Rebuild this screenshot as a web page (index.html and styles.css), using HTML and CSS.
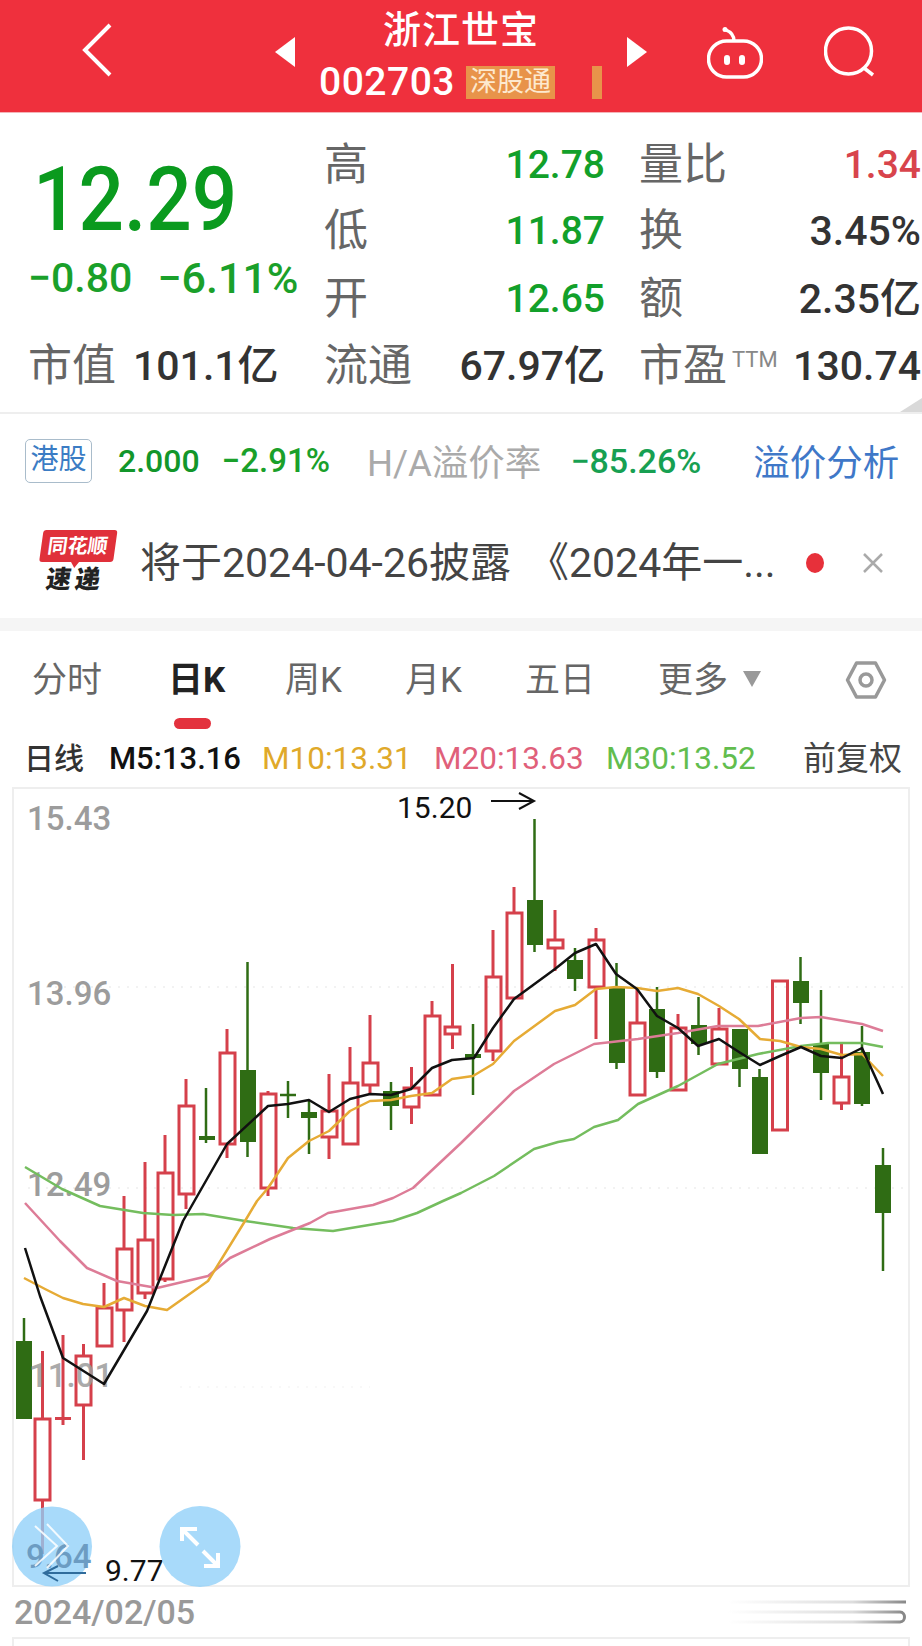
FILE: index.html
```html
<!DOCTYPE html>
<html lang="zh-CN">
<head>
<meta charset="utf-8">
<title>浙江世宝 002703</title>
<link rel="stylesheet" href="styles.css">
</head>
<body>
<div class="page">
  <header class="topbar">
    <svg class="ic-back" viewBox="0 0 30 54"><path d="M28 2 3 27l25 25"/></svg>
    <svg class="ic-tri" viewBox="0 0 20 30"><path d="M20 0v30L0 15z"/></svg>
    <div class="stock-id">
      <div class="stock-name">浙江世宝</div>
      <div class="stock-code-row">
        <span class="stock-code">002703</span>
        <span class="badge-sz">深股通</span>
        <span class="badge-bar"></span>
      </div>
    </div>
    <svg class="ic-tri" viewBox="0 0 20 30"><path d="M0 0v30l20-15z"/></svg>
    <svg class="ic-robot" viewBox="0 0 56 54"><path d="M27 15C27 9 24 6 19 4"/><circle class="robot-tip" cx="18" cy="3.500" r="2.500"/><rect x="1.500" y="15" width="53" height="36" rx="18"/><path class="eye" d="M20 32v4M35 32v4"/></svg>
    <svg class="ic-search" viewBox="0 0 52 52"><circle cx="24.500" cy="25" r="23"/><path d="M40 42 49 49"/></svg>
  </header>

  <section class="stats">
    <div class="price-cell">
      <div class="price">12.29</div>
    </div>
    <div class="chg-cell"><span>−0.80</span><span class="chg-pct">−6.11%</span></div>
    <div class="stat c2"><span class="lab">高</span><span class="val green">12.78</span></div>
    <div class="stat c3"><span class="lab">量比</span><span class="val red">1.34</span></div>
    <div class="stat c2"><span class="lab">低</span><span class="val green">11.87</span></div>
    <div class="stat c3"><span class="lab">换</span><span class="val">3.45%</span></div>
    <div class="stat c2"><span class="lab">开</span><span class="val green">12.65</span></div>
    <div class="stat c3"><span class="lab">额</span><span class="val">2.35亿</span></div>
    <div class="stat mktcap"><span class="lab">市值</span><span class="val">101.1亿</span></div>
    <div class="stat c2"><span class="lab">流通</span><span class="val">67.97亿</span></div>
    <div class="stat c3"><span class="lab">市盈<sup class="ttm">TTM</sup></span><span class="val">130.74</span></div>
  </section>

  <section class="hk">
    <span class="hk-tag">港股</span>
    <span class="hk-price">2.000</span>
    <span class="hk-chg">−2.91%</span>
    <span class="hk-label">H/A溢价率</span>
    <span class="hk-prem">−85.26%</span>
    <span class="hk-link">溢价分析</span>
  </section>

  <section class="news">
    <div class="logo">
      <div class="logo-top">同花顺</div>
      <div class="logo-bot">速递</div>
    </div>
    <div class="news-text">将于2024-04-26披露<span class="quote">《</span>2024年一...</div>
    <span class="news-dot"></span>
    <svg class="news-x" viewBox="0 0 20 20"><path d="M1 1l18 18M19 1 1 19"/></svg>
  </section>

  <div class="band"></div>

  <nav class="tabs">
    <span class="tab">分时</span>
    <span class="tab active">日K</span>
    <span class="tab">周K</span>
    <span class="tab">月K</span>
    <span class="tab">五日</span>
    <span class="tab more">更多<svg class="ic-more" viewBox="0 0 18 16"><path d="M0 0h18L9 16z"/></svg></span>
    <svg class="ic-hex" viewBox="0 0 42 38"><path d="M11.500 2h19L39.500 19 30.500 36h-19L2.500 19z"/><circle cx="21" cy="19" r="6"/></svg>
  </nav>

  <div class="legend">
    <span class="lg-type">日线</span>
    <span class="lg-m5">M5:13.16</span>
    <span class="lg-m10">M10:13.31</span>
    <span class="lg-m20">M20:13.63</span>
    <span class="lg-m30">M30:13.52</span>
    <span class="lg-adj">前复权</span>
  </div>

  <svg class="chart" viewBox="0 786 922 800">
    <rect class="frame" x="13" y="787" width="896" height="798"/>
    <path class="grid" d="M28 986H905M28 1187H905"/>
    <path class="grid-faint" d="M180 1386H370"/>

    <g class="down">
      <path d="M24 1317V1340"/><rect x="16" y="1340" width="16" height="78"/>
      <path d="M206 1087V1142"/><rect x="199" y="1135" width="16" height="4"/>
      <path d="M247.500 961V1156"/><rect x="240" y="1069" width="16" height="72"/>
      <path d="M288 1080V1117M280 1094H296"/>
      <path d="M309 1100V1153"/><rect x="301" y="1111" width="16" height="6"/>
      <path d="M391 1081V1129"/><rect x="383" y="1090" width="16" height="15"/>
      <path d="M473 1023V1094"/><rect x="465" y="1053" width="16" height="4"/>
      <path d="M534.500 818V951"/><rect x="527" y="899" width="16" height="45"/>
      <path d="M575 947V990"/><rect x="567" y="959" width="16" height="19"/>
      <path d="M616.500 962V1068"/><rect x="609" y="987" width="16" height="75"/>
      <path d="M657 986V1077"/><rect x="649" y="1008" width="16" height="63"/>
      <path d="M698.500 996V1054"/><rect x="691" y="1024" width="16" height="19"/>
      <path d="M739.500 1028V1086"/><rect x="732" y="1028" width="16" height="40"/>
      <path d="M759.500 1068V1076"/><rect x="752" y="1076" width="16" height="77"/>
      <path d="M800.500 956V1023"/><rect x="793" y="980" width="16" height="22"/>
      <path d="M821 989V1099"/><rect x="813" y="1043" width="16" height="29"/>
      <path d="M862 1025V1105"/><rect x="854" y="1051" width="16" height="52"/>
      <path d="M883 1147V1270"/><rect x="875" y="1164" width="16" height="48"/>
    </g>

    <g class="up">
      <path d="M42.500 1350V1418M42.500 1499V1553M35 1418H50V1499H35Z"/>
      <path d="M63 1334V1424M55 1417.500H71"/>
      <path d="M83.500 1343V1355M83.500 1404V1459M76 1355H91V1404H76Z"/>
      <path d="M104 1282V1307M97 1307H112V1345H97Z"/>
      <path d="M124 1195V1248M124 1309V1341M117 1248H132V1309H117Z"/>
      <path d="M145 1161V1239M145 1292V1298M138 1239H153V1292H138Z"/>
      <path d="M165 1134V1172M165 1278V1281M158 1172H173V1278H158Z"/>
      <path d="M186 1078V1105M186 1193V1208M179 1105H194V1193H179Z"/>
      <path d="M227 1028V1052M227 1143V1157M220 1052H235V1143H220Z"/>
      <path d="M268 1090V1093M268 1187V1195M261 1093H276V1187H261Z"/>
      <path d="M329 1073V1110M329 1136V1158M322 1110H337V1136H322Z"/>
      <path d="M350 1046V1082M343 1082H358V1143H343Z"/>
      <path d="M370 1014V1062M370 1084V1093M363 1062H378V1084H363Z"/>
      <path d="M411.500 1066V1087M411.500 1106V1123M404 1087H419V1106H404Z"/>
      <path d="M432 1000V1015M425 1015H440V1094H425Z"/>
      <path d="M452.500 963V1026M452.500 1033V1048M445 1026H460V1033H445Z"/>
      <path d="M493 929V976M493 1050V1060M486 976H501V1050H486Z"/>
      <path d="M514 886V912M507 912H522V997H507Z"/>
      <path d="M555 909V939M555 947V970M548 939H563V947H548Z"/>
      <path d="M596 927V939M596 986V1038M589 939H604V986H589Z"/>
      <path d="M637 988V1022M630 1022H645V1094H630Z"/>
      <path d="M678 1013V1027M671 1027H686V1089H671Z"/>
      <path d="M719 1007V1028M712 1028H727V1063H712Z"/>
      <path d="M772.500 980H787.500V1129H772.500Z"/>
      <path d="M841.500 1042V1076M841.500 1102V1109M834 1076H849V1102H834Z"/>
    </g>

    <text class="axis" x="27" y="829">15.43</text>
    <text class="axis" x="27" y="1004">13.96</text>
    <text class="axis" x="27" y="1195">12.49</text>
    <text class="axis faint" x="29" y="1386">11.01</text>

    <polyline class="ma30" points="25,1166 62,1188 100,1205 143,1212 173,1214 203,1213 245,1220 293,1227 333,1230 393,1220 417,1212 443,1200 461,1192 494,1175 534,1148 558,1141 574,1138 594,1126 618,1119 638,1103 678,1085 718,1063 758,1053 801,1045 828,1042 862,1042 883,1046"/>
    <polyline class="ma20" points="25,1202 60,1240 87,1267 117,1280 157,1287 208,1275 230,1257 270,1238 310,1222 328,1212 373,1204 393,1197 413,1187 461,1142 514,1090 554,1063 594,1043 638,1038 678,1032 718,1025 758,1025 801,1017 821,1016 862,1023 883,1030"/>
    <polyline class="ma10" points="24,1277 45,1288 63,1297 83,1303 104,1306 124,1297 145,1305 167,1309 208,1280 245,1220 257,1200 268,1187 288,1157 309,1140 329,1130 350,1110 370,1100 391,1099 411,1095 432,1092 452,1078 473,1075 493,1063 514,1040 555,1010 575,1004 596,988 616,986 637,987 657,990 678,987 698,993 719,1005 739,1018 760,1038 780,1040 801,1046 821,1048 842,1054 862,1053 883,1075"/>
    <polyline class="ma5" points="25,1247 40,1295 63,1357 104,1383 147,1310 183,1220 227,1143 268,1105 288,1103 309,1099 329,1111 350,1098 370,1093 391,1094 411,1088 432,1067 452,1059 474,1057 493,1027 514,998 555,968 575,952 596,943 616,973 637,988 657,1015 678,1027 698,1045 719,1038 739,1051 760,1064 780,1055 801,1046 821,1055 842,1057 862,1047 883,1093"/>

    <text class="note" x="397" y="817">15.20</text>
    <path class="arrow" d="M491 800H534M519 792l15 8-15 8"/>
    <text class="note" x="105" y="1580">9.77</text>

    <circle class="fab" cx="52" cy="1545.500" r="40"/>
    <circle class="fab" cx="200" cy="1545.500" r="40.500"/>
    <text class="axis under-fab" x="26" y="1567">9.64</text>
    <path class="arrow under-fab-arrow" d="M86 1572H44M58 1565l-14 7 14 8"/>
    <path class="fab-ic thin" d="M35 1525l22 20-22 20M47 1523l21 22-21 22"/>
    <path class="fab-ic" d="M182 1540v-12h15M182 1528l16 16M218 1552v13h-14M218 1565l-15-15"/>
  </svg>

  <div class="datebar">
    <span class="date">2024/02/05</span>
    <svg class="date-end" viewBox="0 0 180 30">
      <defs><linearGradient id="fade"><stop offset="0" stop-color="#ddd" stop-opacity="0"/><stop offset=".7" stop-color="#ddd"/><stop offset="1" stop-color="#888"/></linearGradient></defs>
      <path class="fade-line" d="M0 5.010H178M0 15.010H172M0 25.010H172"/>
      <path class="fade-curve" d="M172 15c6 0 6 10 0 10"/>
    </svg>
  </div>
  <div class="tail"></div>
</div>
</body>
</html>
```
FILE: styles.css
```css
* { box-sizing: border-box; }
html, body { margin: 0; padding: 0; background: #fff; }
body { font-family: Roboto, "Noto Sans CJK SC", sans-serif; overflow: hidden; }
.page { width: 922px; height: 1646px; overflow: hidden; }

/* top bar */
.topbar { height: 113px; background: #ef303d; border-bottom: 1px solid #f4b4b8; display: flex; align-items: flex-start; padding-left: 82px; color: #fff; }
.ic-back { width: 30px; height: 54px; margin-top: 23px; fill: none; stroke: #fff; stroke-width: 4; }
.ic-tri { width: 20px; height: 30px; margin-top: 37px; fill: #fff; }
.ic-back + .ic-tri { margin-left: 163px; }
.stock-id { width: 332px; display: flex; flex-direction: column; align-items: center; }
.stock-name { font-size: 38px; line-height: 44px; margin-top: 8px; font-weight: 500; letter-spacing: 1px; }
.stock-code-row { display: flex; align-items: center; margin-top: 13px; height: 34px; margin-left: -1px; }
.stock-code { font-size: 39px; line-height: 34px; letter-spacing: .5px; font-weight: 500; }
.badge-sz { width: 89px; height: 33px; margin-left: 11px; background: #e8934a; color: #fde9cf; font-size: 27px; line-height: 33px; text-align: center; white-space: nowrap; }
.badge-bar { width: 10px; height: 33px; margin-left: 37px; background: #e8934a; }
.ic-robot { width: 56px; height: 54px; margin: 26px 0 0 60px; fill: none; stroke: #fff; stroke-width: 3.500; }
.ic-robot .eye { stroke-width: 6; stroke-linecap: round; }
.ic-robot .robot-tip { fill: #fff; stroke: none; }
.ic-search { width: 52px; height: 52px; margin: 26px 0 0 61px; fill: none; stroke: #fff; stroke-width: 3.500; }

/* quote stats */
.stats { position: relative; height: 301px; padding: 19px 1px 0 28px; border-bottom: 2px solid #eee; display: grid; grid-template-columns: 296px 281px 34px 282px; grid-template-rows: 66px 66px 69px 66px; }
.stats::after { content: ""; position: absolute; right: 0; bottom: 0; width: 22px; height: 14px; background: #d9d9d9; clip-path: polygon(100% 0, 100% 100%, 0 100%); }
.price-cell { grid-column: 1; grid-row: 1 / span 2; display: flex; align-items: center; }
.price { font-size: 80px; line-height: 80px; font-weight: 500; color: #0a9a1e; margin: 4px 0 0 5px; transform: scaleY(1.12); }
.chg-cell { grid-column: 1; grid-row: 3; display: flex; gap: 25px; font-size: 41px; line-height: 38px; margin-top: -5px; color: #1aa02a; font-weight: 500; white-space: nowrap; }
.chg-pct { font-size: 43px; }
.stat { display: flex; justify-content: space-between; align-items: center; color: #666; }
.c2 { grid-column: 2; }
.c3 { grid-column: 4; }
.lab { font-size: 44px; line-height: 48px; color: #666; white-space: nowrap; }
.val { font-size: 41px; line-height: 48px; font-weight: 500; color: #333; white-space: nowrap; }
.val.green { color: #12a02a; font-size: 39px; }
.val.red { color: #d8444c; font-size: 39px; }
.mktcap { grid-column: 1; justify-content: flex-start; gap: 17px; }
.ttm { font-size: 22px; line-height: 1; vertical-align: 14px; margin-left: 5px; color: #888; }

/* HK line */
.hk { height: 93px; display: flex; align-items: center; padding-left: 25px; white-space: nowrap; }
.hk-tag { width: 67px; height: 44px; border: 1.5px solid #a9bccb; border-radius: 5px; color: #3b7cc4; font-size: 28px; line-height: 40px; text-align: center; }
.hk-price { margin-left: 26px; font-size: 32px; font-weight: 500; color: #12962a; }
.hk-chg { margin-left: 22px; font-size: 33px; font-weight: 500; color: #1aa02a; }
.hk-label { margin-left: 37px; font-size: 36.500px; color: #aaa; }
.hk-prem { margin-left: 29px; font-size: 34px; font-weight: 500; color: #17a052; }
.hk-link { margin-left: 52px; font-size: 36.500px; color: #3f78c8; }

/* news */
.news { height: 111px; display: flex; align-items: center; padding-left: 38px; white-space: nowrap; }
.logo { position: relative; width: 75px; display: flex; flex-direction: column; align-items: center; transform: skewX(-8deg); }
.logo-top { position: relative; width: 74px; height: 32px; background: #e0303a; border-radius: 3px; color: #fff; font-size: 20px; line-height: 32px; font-weight: 700; text-align: center; }
.logo-top::after { content: ""; position: absolute; left: 32px; bottom: -6px; border: 4px solid transparent; border-top: 6px solid #e0303a; border-bottom: 0; }
.logo-bot { height: 33px; padding-left: 4px; color: #222; font-size: 25px; line-height: 36px; font-weight: 900; letter-spacing: 4px; }
.news-text { width: 650px; margin-left: 27px; font-size: 41px; line-height: 50px; color: #444; overflow: hidden; }
.quote { margin-left: 17px; }
.news-dot { width: 18px; height: 20px; margin-left: 16px; border-radius: 50%; background: #e7303a; }
.news-x { width: 20px; height: 20px; margin-left: 39px; fill: none; stroke: #aaa; stroke-width: 2.500; }

.band { height: 13px; background: #f5f5f5; }

/* tabs */
.tabs { height: 105px; padding: 30px 0 0 32px; display: grid; grid-template-columns: 136px 117px 120px 120px 133px 187px 42px; align-items: start; font-size: 35px; line-height: 40px; color: #666; }
.tab { position: relative; white-space: nowrap; }
.tab.active { color: #222; font-weight: 700; }
.tab.active::after { content: ""; position: absolute; left: 6px; top: 57px; width: 37px; height: 11px; border-radius: 6px; background: #e3323e; }
.ic-more { width: 18px; height: 16px; margin-left: 15px; fill: #999; vertical-align: 5px; }
.ic-hex { width: 42px; height: 38px; fill: none; stroke: #999; stroke-width: 3.500; stroke-linejoin: round; }

/* legend */
.legend { height: 51px; padding-left: 24px; display: grid; grid-template-columns: 85px 153px 172px 172px 197px auto; align-items: start; font-size: 31.500px; line-height: 46px; white-space: nowrap; }
.lg-type { color: #333; font-weight: 500; font-size: 30px; }
.lg-m5 { color: #111; font-weight: 500; font-size: 31px; }
.lg-m10 { color: #e0a92a; }
.lg-m20 { color: #e0607a; }
.lg-m30 { color: #62bd4e; }
.lg-adj { color: #444; font-size: 33px; }

/* chart */
.chart { display: block; width: 922px; height: 800px; }
.frame { fill: #fff; stroke: #eee; stroke-width: 2; }
.grid { fill: none; stroke: #eee; stroke-width: 1.500; stroke-dasharray: 2 7; }
.grid-faint { fill: none; stroke: #f6f6f6; stroke-width: 1.500; stroke-dasharray: 2 7; }
.down path { fill: none; stroke: #2f6c14; stroke-width: 2.500; }
.down rect { fill: #2f6c14; }
.up path { fill: none; stroke: #d5404b; stroke-width: 3; }
.axis { font-size: 33px; font-weight: 500; fill: #9c9c9c; }
.axis.faint { opacity: .85; }
.axis.under-fab { fill: #6c9cc2; }
.note { font-size: 30px; fill: #111; }
.arrow { fill: none; stroke: #111; stroke-width: 2; }
.arrow.under-fab-arrow { stroke: #2f6c9c; }
.ma5, .ma10, .ma20, .ma30 { fill: none; stroke-linejoin: round; stroke-width: 2.500; }
.ma5 { stroke: #111; }
.ma10 { stroke: #e6ab35; }
.ma20 { stroke: #dd7c97; }
.ma30 { stroke: #74bd5e; }
.fab { fill: #8fd0f9; fill-opacity: .78; }
.fab-ic { fill: none; stroke: #fff; stroke-width: 4; }
.fab-ic.thin { stroke-width: 2; stroke-opacity: .85; }

/* date bar */
.datebar { height: 50px; padding: 0 14px; display: flex; justify-content: space-between; align-items: center; }
.date { font-size: 34px; font-weight: 500; line-height: 40px; color: #999; }
.date-end { width: 180px; height: 30px; }
.fade-line { fill: none; stroke: url(#fade); stroke-width: 3; }
.fade-curve { fill: none; stroke: #888; stroke-width: 3; }
.tail { height: 11px; margin: 0 12px; border: 2px solid #eee; border-bottom: 0; }
```
